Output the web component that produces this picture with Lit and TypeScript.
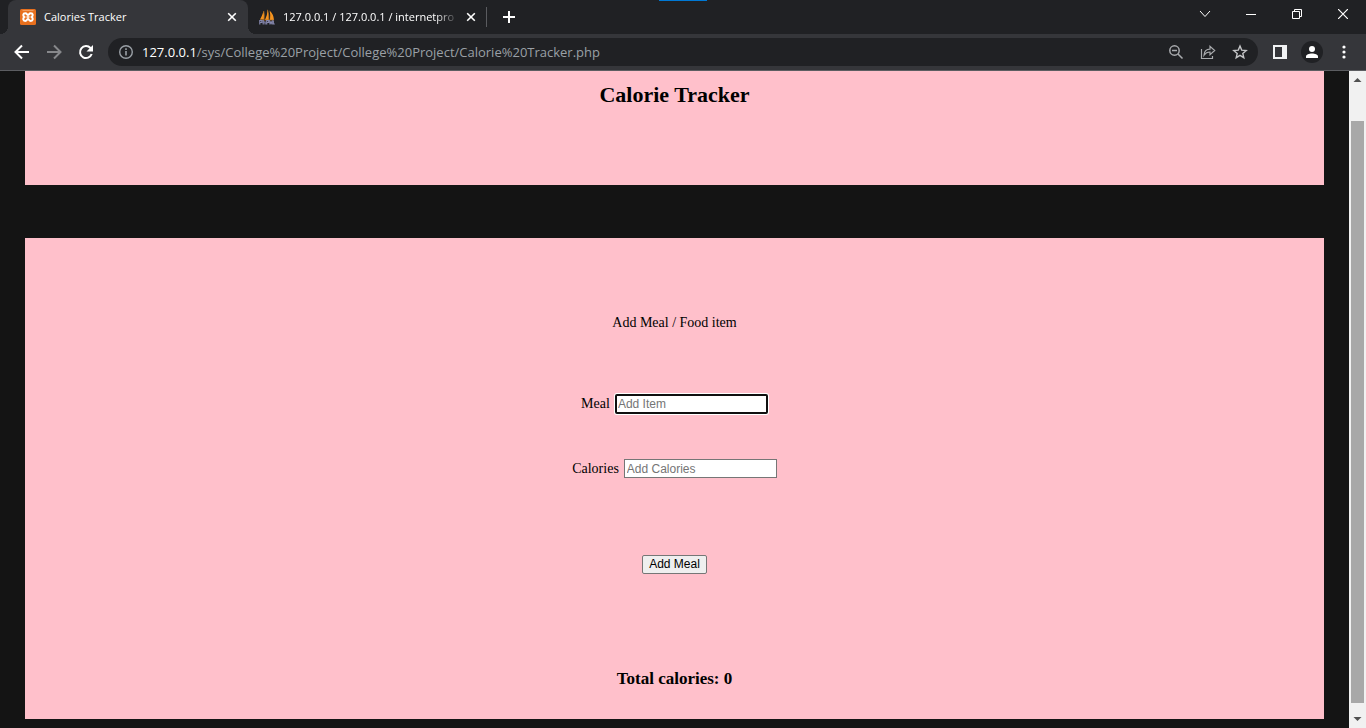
import { LitElement, html, css } from "lit";
import { customElement, state } from "lit/decorators.js";

@customElement("browser-tabs")
class BrowserTabs extends LitElement {
  static styles = css`
    :host { display: block; background: #202124; }
    .strip { position: relative; display: flex; height: 34px; padding-left: 8px; font: 11px/16px "Open Sans", "Noto Sans", sans-serif; color: #fff; }
    .accent { position: absolute; top: 0; left: 50%; width: 48px; height: 1px; margin-left: -24px; background: #0078d4; }
    .tab { position: relative; display: flex; align-items: center; box-sizing: border-box; width: 240px; padding: 0 9px 0 12px; }
    .second { width: 238px; padding: 0 8px 0 11px; }
    .active { background: #35363a; border-radius: 8px 8px 0 0; }
    .active::before, .active::after { content: ""; position: absolute; bottom: 0; width: 8px; height: 8px; }
    .active::before { left: -8px; background: radial-gradient(circle at 0 0, transparent 8px, #35363a 8px); }
    .active::after { right: -8px; background: radial-gradient(circle at 100% 0, transparent 8px, #35363a 8px); }
    .title { flex: 1; min-width: 0; margin: 0 8px; overflow: hidden; white-space: nowrap; }
    .fade { -webkit-mask-image: linear-gradient(to right, #000 152px, transparent 176px); mask-image: linear-gradient(to right, #000 152px, transparent 176px); }
    .icon { flex: none; display: block; }
    button { display: flex; align-items: center; justify-content: center; flex: none; padding: 0; border: 0; background: none; color: #fff; }
    .close { width: 14px; height: 16px; }
    .divider { width: 1px; height: 20px; margin-top: 7px; background: #5a5b5f; }
    .plus { width: 28px; height: 34px; margin-left: 8px; }
    .controls { display: flex; margin-left: auto; }
    .controls button { width: 46px; height: 28px; }
  `;
  close() {
    return html`<button class="close" aria-label="Close tab"><svg width="10" height="10" viewBox="0 0 10 10"><path d="M1.2 1.2 8.8 8.8M8.8 1.2 1.2 8.8" stroke="#fff" stroke-width="1.6"/></svg></button>`;
  }
  render() {
    return html`
      <div class="strip">
        <div class="accent"></div>
        <div class="tab active">
          <svg class="icon" width="16" height="16" viewBox="0 0 16 16">
            <rect width="16" height="16" rx="1.5" fill="#e8701e"/>
            <path d="M2.500 1.500h11" stroke="#f3a870" stroke-width=".8"/>
            <path d="M5.200 4.200C7 4.200 7 6 8 6s1-1.800 2.800-1.800c2.300 0 2.500 2.600.9 3.800 1.600 1.200 1.400 4-.9 4C9 12 9 10 8 10s-1 2-2.800 2c-2.300 0-2.500-2.800-.9-4-1.600-1.200-1.400-3.800.9-3.800Z" fill="none" stroke="#fff" stroke-width="2"/>
            <path d="M6.500 8h3" stroke="#fff" stroke-width="1.600"/>
          </svg>
          <span class="title">Calories Tracker</span>
          ${this.close()}
        </div>
        <div class="tab second">
          <svg class="icon" width="16" height="16" viewBox="0 0 16 16">
            <path d="M1 10.500Q3 7 4.700 2q.8 4.500.3 8.500ZM6 11Q8.500 6 8.500.8q1.600 5 1.400 10.200ZM11 11Q11.700 6 10.600 1.500 14.500 5 15 11Z" fill="#f5931e"/>
            <path d="M5 10.500Q5.600 6 4.700 2M9.900 11Q10 5 8.500.8M1 11h14" stroke="#b5721f" stroke-width=".8" fill="none"/>
            <path d="M.8 15.500v-4h2v2h-2M4.200 11v4.500M4.200 13h1.900v2.500M7.700 15.500v-4h2v2h-2M11 15.500v-3l1 1.500 1-1.500v3M14.300 11.500V15h1.500" stroke="#8587ad" stroke-width="1.200" fill="none"/>
          </svg>
          <span class="title fade">127.0.0.1 / 127.0.0.1 / internetpro</span>
          ${this.close()}
        </div>
        <div class="divider"></div>
        <button class="plus" aria-label="New tab"><svg width="12" height="12"><path d="M6 0v12M0 6h12" stroke="#fff" stroke-width="2"/></svg></button>
        <div class="controls">
          <button aria-label="Search tabs"><svg width="12" height="8"><path d="m1 1 5 5.500L11 1" fill="none" stroke="#fff"/></svg></button>
          <button aria-label="Minimize"><svg width="10" height="2"><path d="M0 1h10" stroke="#fff" shape-rendering="crispEdges"/></svg></button>
          <button aria-label="Restore"><svg width="10" height="10"><path d="M.5 2.500h7v7h-7ZM2.500 2.500v-2h7v7h-2" fill="none" stroke="#fff"/></svg></button>
          <button aria-label="Close"><svg width="10" height="10"><path d="m0 0 10 10M10 0 0 10" stroke="#fff" stroke-width="1.200"/></svg></button>
        </div>
      </div>`;
  }
}

@customElement("browser-toolbar")
class BrowserToolbar extends LitElement {
  static styles = css`
    :host { display: block; background: #35363a; border-bottom: 1px solid #5c5d61; }
    .bar { display: flex; align-items: center; height: 36px; padding: 0 6px; }
    button { display: flex; align-items: center; justify-content: center; flex: none; width: 32px; height: 28px; padding: 0; border: 0; background: none; border-radius: 14px; }
    svg { display: block; }
    .address { display: flex; align-items: center; flex: 1; min-width: 0; height: 28px; margin: 0 6px; padding: 0 2px 0 10px; border-radius: 14px; background: #202124; }
    .url { flex: 1; min-width: 0; margin-left: 8px; overflow: hidden; white-space: nowrap; text-decoration: none; font: 13px/20px "Open Sans", "Noto Sans", sans-serif; color: #9aa0a6; }
    .host { color: #fff; }
  `;
  render() {
    return html`
      <div class="bar">
        <button aria-label="Back"><svg width="16" height="16" viewBox="0 0 16 16"><path d="M15 8H2M8 1.500 1.500 8 8 14.500" fill="none" stroke="#fff" stroke-width="2"/></svg></button>
        <button aria-label="Forward"><svg width="16" height="16" viewBox="0 0 16 16"><path d="M1 8h13M8 1.500 14.500 8 8 14.500" fill="none" stroke="#87888b" stroke-width="2"/></svg></button>
        <button aria-label="Reload"><svg width="16" height="16" viewBox="0 0 16 16"><path d="M13.700 10A6 6 0 1 1 12.500 4l1.500 1.500" fill="none" stroke="#fff" stroke-width="2"/><path d="M15 1v6.500H8.500Z" fill="#fff"/></svg></button>
        <div class="address">
          <svg width="16" height="16" viewBox="0 0 16 16"><circle cx="8" cy="8" r="6.300" fill="none" stroke="#9aa0a6" stroke-width="1.400"/><path d="M8 7v4.500M8 4.300V6" stroke="#9aa0a6" stroke-width="1.600"/></svg>
          <a class="url" href="#"><span class="host">127.0.0.1</span>/sys/College%20Project/College%20Project/Calorie%20Tracker.php</a>
          <button aria-label="Zoom"><svg width="16" height="16" viewBox="0 0 16 16"><circle cx="6.500" cy="6.500" r="4.700" fill="none" stroke="#a9abae" stroke-width="1.500"/><path d="m10 10 4.500 4.500M4 6.500h5" stroke="#a9abae" stroke-width="1.500"/></svg></button>
          <button aria-label="Share"><svg width="16" height="16" viewBox="0 0 16 16"><path d="M1.500 5v9.500h11V12M4 11.200C4.300 7 6.500 5.200 10 5.200V2.300l4.700 4.200-4.700 4.200V8C7.500 8 5.500 9 4 11.200Z" fill="none" stroke="#a9abae" stroke-width="1.200"/></svg></button>
          <button aria-label="Bookmark"><svg width="16" height="16" viewBox="0 0 16 16"><path d="m8 2 1.700 4.100 4.500.4-3.400 2.900 1 4.300L8 11.400l-3.800 2.300 1-4.300-3.400-2.900 4.500-.4Z" fill="none" stroke="#c4c5c7" stroke-width="1.400"/></svg></button>
        </div>
        <button aria-label="Side panel"><svg width="14" height="14"><path fill-rule="evenodd" d="M0 0h14v14H0ZM2 2v10h7V2Z" fill="#f1f3f4"/></svg></button>
        <button aria-label="Profile"><svg width="22" height="22"><circle cx="11" cy="11" r="11" fill="#202124"/><circle cx="11" cy="8" r="3" fill="#fff"/><path d="M5 17v-1.500c0-4 12-4 12 0V17Z" fill="#fff"/></svg></button>
        <button aria-label="Menu"><svg width="4" height="16"><circle cx="2" cy="3" r="1.600" fill="#fff"/><circle cx="2" cy="8" r="1.600" fill="#fff"/><circle cx="2" cy="13" r="1.600" fill="#fff"/></svg></button>
      </div>`;
  }
}

@customElement("calorie-tracker")
class CalorieTracker extends LitElement {
  static styles = css`
    :host { display: block; padding: 0 25px 9px; background: #141414; color: #000; text-align: center; font: 14px/18px "Liberation Serif", "Times New Roman", serif; }
    .card { background: #ffc0cb; }
    .header { padding: 11px 0 77px; margin-bottom: 53px; }
    h1 { margin: 0; font-size: 22px; line-height: 26px; }
    .form { display: flex; flex-direction: column; align-items: center; padding: 76px 0 29px; }
    p { margin: 0 0 62px; }
    .row { display: flex; align-items: center; gap: 5px; height: 19px; margin-bottom: 46px; }
    .last { margin-bottom: 77px; }
    input { box-sizing: border-box; width: 153px; height: 19px; padding: 0 2px; border: 1px solid #767676; background: #fff; font: 12px/15px "Liberation Sans", Arial, sans-serif; }
    input::placeholder { color: #757575; opacity: 1; }
    .focused { height: 20px; padding: 0 1px; border: 2px solid #101010; border-radius: 2px; box-shadow: 0 0 0 1px #fff; outline: none; }
    button { box-sizing: border-box; height: 19px; margin-bottom: 94px; padding: 0 6px; border: 1px solid #767676; border-radius: 2px; background: #efefef; color: #000; font: 12px/15px "Liberation Sans", Arial, sans-serif; }
    h2 { margin: 0; font-size: 17px; line-height: 22px; }
  `;
  @state() private total = 0;
  private add(e: Event) {
    e.preventDefault();
    const field = this.renderRoot.querySelector<HTMLInputElement>("#calories")!;
    this.total += Number(field.value) || 0;
    field.value = "";
  }
  render() {
    return html`
      <header class="card header"><h1>Calorie Tracker</h1></header>
      <form class="card form" @submit=${this.add}>
        <p>Add Meal / Food item</p>
        <div class="row"><label for="meal">Meal</label><input id="meal" class="focused" type="text" placeholder="Add Item"></div>
        <div class="row last"><label for="calories">Calories</label><input id="calories" type="text" placeholder="Add Calories"></div>
        <button type="submit">Add Meal</button>
        <h2>Total calories: ${this.total}</h2>
      </form>`;
  }
}

@customElement("app-root")
class AppRoot extends LitElement {
  static styles = css`
    :host { display: flex; flex-direction: column; height: 100vh; overflow: hidden; }
    .view { display: flex; flex: 1; min-height: 0; background: #141414; }
    .page { flex: 1; min-width: 0; }
    .scroll { display: flex; flex-direction: column; align-items: center; width: 17px; background: #f1f1f1; }
    .arrow { flex: none; width: 17px; height: 17px; }
    .track { flex: 1; width: 13px; padding: 33px 0 8px; box-sizing: border-box; display: flex; }
    .thumb { flex: 1; background: #a8a8a8; }
  `;
  render() {
    return html`
      <browser-tabs></browser-tabs>
      <browser-toolbar></browser-toolbar>
      <div class="view">
        <calorie-tracker class="page"></calorie-tracker>
        <div class="scroll">
          <svg class="arrow" viewBox="0 0 17 17"><path d="m4.500 11 4-4 4 4Z" fill="#505050"/></svg>
          <div class="track"><div class="thumb"></div></div>
          <svg class="arrow" viewBox="0 0 17 17"><path d="m4.500 6 4 4 4-4Z" fill="#505050"/></svg>
        </div>
      </div>`;
  }
}
